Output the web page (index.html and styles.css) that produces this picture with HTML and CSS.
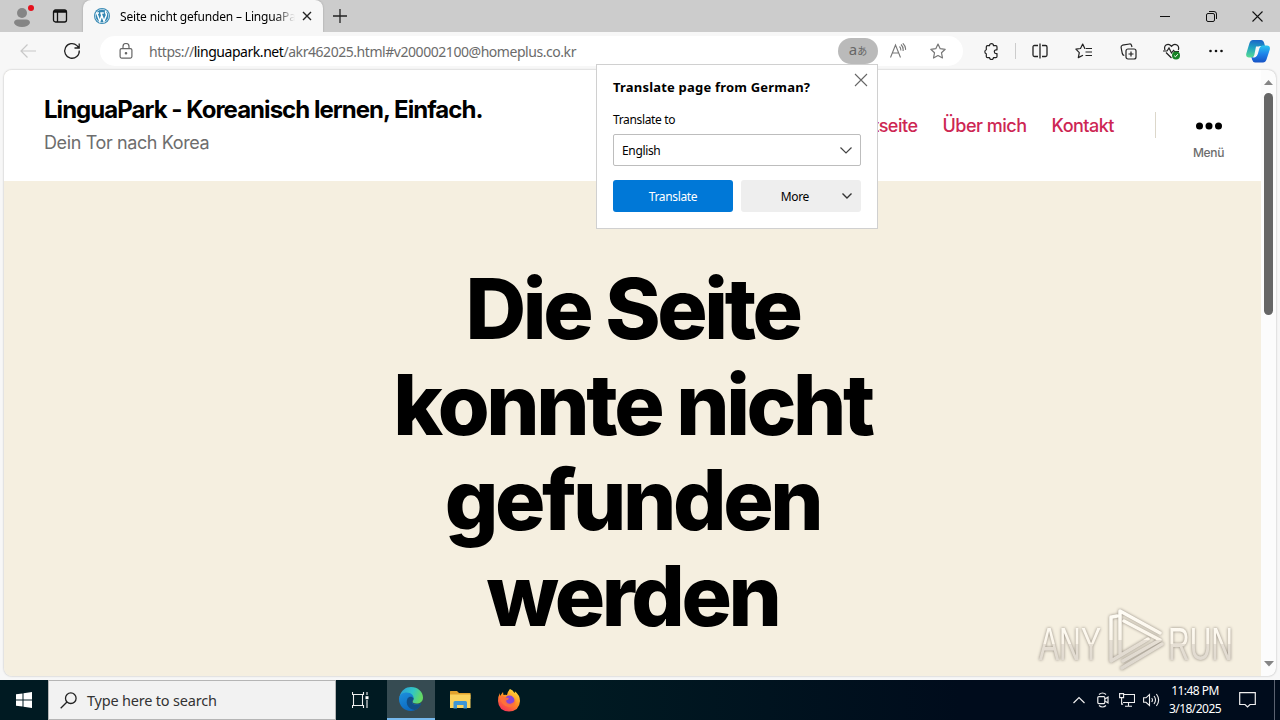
FILE: index.html
```html
<!DOCTYPE html>
<html lang="de">
<head>
<meta charset="utf-8">
<title>Seite nicht gefunden – LinguaPark</title>
<link rel="stylesheet" href="styles.css">
</head>
<body>
<div class="desktop">
  <div class="tabbar">
    <div class="profile">
      <svg width="24" height="26" viewBox="0 0 24 26"><circle cx="12" cy="10" r="5" fill="#858585"/><path d="M4 20q0-3.500 4-3.500h8q4 0 4 3.500q-2 4-8 4t-8-4z" fill="#858585"/><circle cx="21" cy="5" r="3" fill="#e5101c"/></svg>
    </div>
    <div class="tab-actions">
      <svg width="16" height="16" viewBox="0 0 16 16" fill="none" stroke="#111" stroke-width="1.300"><rect x="1.500" y="2" width="13" height="12" rx="2"/><path d="M2 3.500h12" stroke-width="2.500"/><path d="M5.500 4v10"/></svg>
    </div>
    <div class="tab">
      <svg class="favicon" width="16" height="16" viewBox="0 0 16 16"><circle cx="8" cy="8" r="8" fill="#3386b2"/><circle cx="8" cy="8" r="6.700" fill="none" stroke="#e4f2f8" stroke-width=".7"/><path d="M2 5h3M6.300 5h3.500M2.800 5.200l3 8 2-6M7 5.200l3 8q1.300-3.500 2.200-5.500.6-1.700-.5-2.800-.7-1.400.7-1.700" fill="none" stroke="#fff" stroke-width="1.500"/></svg>
      <span class="tab-title">Seite nicht gefunden – LinguaPark</span>
      <svg class="tab-close" width="10" height="10" viewBox="0 0 10 10" stroke="#222" stroke-width="1.400"><path d="M1 1l8 8M9 1L1 9"/></svg>
    </div>
    <div class="newtab"><svg width="14" height="14" viewBox="0 0 14 14" stroke="#222" stroke-width="1.300"><path d="M7 0v14M0 7h14"/></svg></div>
    <div class="winctl">
      <div><svg width="10" height="10" viewBox="0 0 10 10" stroke="#111"><path d="M0 5.500h10"/></svg></div>
      <div><svg width="11" height="11" viewBox="0 0 11 11" fill="none" stroke="#111"><rect x=".5" y="2.500" width="8" height="8" rx="1.500"/><path d="M3 .5h5q2.500 0 2.500 2.500v5"/></svg></div>
      <div><svg width="11" height="11" viewBox="0 0 11 11" stroke="#111" stroke-width="1.100"><path d="M.5.5l10 10M10.500.5l-10 10"/></svg></div>
    </div>
  </div>

  <div class="toolbar">
    <div class="tool back"><svg width="16" height="14" viewBox="0 0 16 14" fill="none" stroke="#c8c8c8" stroke-width="1.200"><path d="M16 7H1M7.500.5L1 7l6.500 6.500"/></svg></div>
    <div class="tool"><svg width="18" height="18" viewBox="0 0 18 18" fill="none" stroke="#222" stroke-width="1.300"><path d="M16.300 8.500A7.300 7.300 0 1 1 14 3.600L16 6M16.200 1.500V6H11.500"/></svg></div>
    <div class="address">
      <svg class="lock" width="14" height="16" viewBox="0 0 14 16" fill="none" stroke="#666" stroke-width="1.200"><rect x="1.100" y="5.600" width="11.800" height="9.500" rx="1.500"/><path d="M4 5.500V3.500a3 3 0 0 1 6 0v2"/><circle cx="7" cy="10.300" r=".7" fill="#666"/></svg>
      <span class="url">https://<b>linguapark.net</b>/akr462025.html#v200002100@homeplus.co.kr</span>
      <span class="lang-pill"><span class="lat">a</span><span class="kana">あ</span></span>
      <div class="addr-icon"><svg width="18" height="16" viewBox="0 0 18 16" fill="none" stroke="#777" stroke-width="1.100"><path d="M1.500 14.500L6.500 2l5 12.500M3.300 10h6.400M10.500 3.500q1.500 1.500 1.300 4M12 1.500q2.600 2.500 2.100 6.500M13.800.3q3.200 3 2.700 6.500"/></svg></div>
      <div class="addr-icon star"><svg width="16" height="16" viewBox="0 0 16 16" fill="none" stroke="#777" stroke-width="1.200" stroke-linejoin="round"><path d="M8 1l2.200 4.700 5 .6-3.700 3.500 1 5.200L8 12.500 3.500 15l1-5.200L.8 6.300l5-.6z"/></svg></div>
    </div>
    <div class="tools">
      <div class="tool ext"><svg width="16" height="17" viewBox="0 0 16 17" fill="none" stroke="#222" stroke-width="1.200" stroke-linejoin="round"><path d="M4.500 2.700H6.500a2 2 0 0 1 4 0h2.300q1.200 0 1.200 1.200v2.900h-.8a1.900 1.900 0 0 0 0 3.800h.8v2.800q0 1.200-1.200 1.200H10.500a2 2 0 0 1-4 0H4.500q-1.200 0-1.200-1.200V10.700a2.100 2.100 0 0 1 0-4V3.900q0-1.200 1.200-1.200z"/></svg></div>
      <div class="sep"></div>
      <div class="tool"><svg width="16" height="16" viewBox="0 0 16 16" fill="none" stroke="#222" stroke-width="1.300"><path d="M6 2.500H2.500q-1.500 0-1.500 1.500v8q0 1.500 1.500 1.500H6M10 2.500h3.500q1.500 0 1.500 1.500v8q0 1.500-1.500 1.500H10M8 .5v15"/></svg></div>
      <div class="tool"><svg width="18" height="16" viewBox="0 0 18 16" fill="none" stroke="#222" stroke-width="1.200" stroke-linejoin="round"><path d="M10.500 5.500H9.800L7.700 1 5.500 5.500.9 6.200l3.400 3.400-1 5 4.700-2.400M11 5.500h6M10.500 9H17M10.500 12.500H17"/></svg></div>
      <div class="tool"><svg width="17" height="17" viewBox="0 0 17 17" fill="none" stroke="#222" stroke-width="1.200"><rect x="6" y="6" width="10" height="10" rx="2"/><path d="M11 8.500v5M8.500 11h5M4.300 12.500Q2.700 12.200 2.300 10.500L1.100 4.500Q.9 2.700 2.500 2.200L9.500 1q1.700-.2 2 1.300L12 4"/></svg></div>
      <div class="tool"><svg width="18" height="17" viewBox="0 0 18 17" fill="none" stroke="#222" stroke-width="1.200"><path d="M2 7Q.8 3.500 3 2q3-1.700 5.500 1.300Q11 .3 14 2q2.500 1.700 1.300 5M3 9.500l5.500 5.500M0 8h4l2-3 2.500 5L10.500 7.500l1 1H16"/><circle cx="13" cy="12.500" r="4" fill="#168326" stroke="none"/><path d="M11.200 12.700l1.300 1.100 2.300-2.600" stroke="#fff" stroke-width="1"/></svg></div>
      <div class="tool"><svg width="14" height="4" viewBox="0 0 14 4" fill="#111"><circle cx="1.500" cy="2" r="1.300"/><circle cx="7" cy="2" r="1.300"/><circle cx="12.500" cy="2" r="1.300"/></svg></div>
      <div class="copilot"><svg width="24" height="23" viewBox="0 0 24 23"><defs><linearGradient id="ca" x1="0.300" y1="0" x2=".2" y2="1"><stop offset="0" stop-color="#1b68c8"/><stop offset=".45" stop-color="#22a4c0"/><stop offset="1" stop-color="#58dc93"/></linearGradient><linearGradient id="cb" x1="0" y1="0" x2="0" y2="1"><stop offset="0" stop-color="#2bc5ef"/><stop offset=".5" stop-color="#1d83ea"/><stop offset="1" stop-color="#1652c5"/></linearGradient></defs><path d="M7 0h8q2.500 0 3.300 3.500l.7 2.500h-4q-2.500 0-3.300 3l-1.700 6q-.8 2.500-3 2.500H3q-3.500 0-2.700-4L3.500 3Q4.500 0 7 0z" fill="url(#ca)"/><path d="M17 22.500H9q-2 0-3-3l-.5-2.500H9q2 0 2.800-3l1.700-6q1-2.500 3-2.500h4.500q3.500 0 2.800 4L20.500 19.500q-1 3-3.500 3z" fill="url(#cb)"/><path d="M10 6.500h4.500q-1.500.5-2 2.500l-2 6.500q-.6 2-2 2H6q1.800-.2 2.300-2.500z" fill="#f7f7f7"/></svg></div>
    </div>
  </div>

  <div class="frame">
    <main class="page">
      <header class="site-header">
        <div class="titles">
          <div class="site-title">LinguaPark - Koreanisch lernen, Einfach.</div>
          <div class="site-desc">Dein Tor nach Korea</div>
        </div>
        <nav class="nav"><a>Startseite</a><a class="about">Über mich</a><a class="contact">Kontakt</a></nav>
        <div class="menu">
          <svg width="26" height="8" viewBox="0 0 26 8"><circle cx="3.500" cy="4" r="3.500"/><circle cx="13" cy="4" r="3.500"/><circle cx="22.500" cy="4" r="3.500"/></svg>
          <span>Menü</span>
        </div>
      </header>
      <section class="hero"><h1>Die Seite<br>konnte nicht<br>gefunden<br>werden</h1></section>
    </main>
    <div class="scrollbar">
      <svg width="9" height="6" viewBox="0 0 9 6"><path d="M4.500 0L9 5H0z" fill="#858585"/></svg>
      <div class="thumb"></div>
      <svg class="down" width="10" height="6" viewBox="0 0 10 6"><path d="M0 0h10L5 5.500z" fill="#858585"/></svg>
    </div>
  </div>

  <div class="taskbar">
    <div class="start"><svg width="16" height="16" viewBox="0 0 16 16" fill="#fff"><path d="M0 2.300L6.500 1.400V7.500H0zM7.500 1.200L16 0v7.500H7.500zM0 8.500h6.500v6.100L0 13.700zM7.500 8.500H16V16l-8.500-1.200z"/></svg></div>
    <div class="search"><svg width="17" height="17" viewBox="0 0 17 17" fill="none" stroke="#222" stroke-width="1.300"><circle cx="10.800" cy="6.200" r="5.300"/><path d="M7 10L.7 16.300"/></svg><span>Type here to search</span></div>
    <div class="task taskview"><svg width="17" height="16" viewBox="0 0 17 16" fill="none" stroke="#eee" stroke-width="1.100"><path d="M.5 0v2.500h11V0M.5 16v-2.500h11V16M1.500 2.500v11M10.500 2.500v11M15 0v3M15 8v8"/><path d="M13.500 4.200h3v3h-3z" fill="#fff" stroke="none"/></svg></div>
    <div class="task active"><svg width="26" height="26" viewBox="0 0 26 26"><defs><linearGradient id="ea" x1="0" y1="0" x2="1" y2=".3"><stop offset="0" stop-color="#2a98d8"/><stop offset=".6" stop-color="#31c5c5"/><stop offset="1" stop-color="#63d865"/></linearGradient><linearGradient id="eb" x1="0" y1="0" x2=".6" y2="1"><stop offset="0" stop-color="#1d90dc"/><stop offset="1" stop-color="#0b66bd"/></linearGradient></defs><path d="M1.500 11C3 4 8 1 13 1c7 0 12 5 12 10.500 0 4-3 6-6.500 6-3 0-4.500-1.200-3.700-2.300C17 12 14 9 10 9c-4 0-7 1-8.500 2z" fill="url(#ea)"/><path d="M1 13C1 8.500 5 6.500 8.500 6.500c5 0 7.500 3.500 7 6-.3 1.500-1.500 1.700-1.500 3 0 2 3 3.500 6 3 1.500-.2 2.500-.8 3.200-1C21 22 17.500 25 13 25 6 25 1 19.500 1 13z" fill="url(#eb)"/><path d="M9.500 12.500c-2.500 5 1 11 7.500 11.500 3-1 5-3.500 6.200-6.500-5 2.500-10 1-9.200-2.500.3-1.300 1.500-1.500 1.500-2.500-1-2.500-4.500-2.500-6 0z" fill="#124f86"/></svg></div>
    <div class="task"><svg width="22" height="20" viewBox="0 0 22 20"><path d="M1 1.500Q1 1 1.500 1H8l2 2h11.500v6H1z" fill="#e2a32d"/><path d="M1 4.500h20.500V18H1z" fill="#fbd35e"/><path d="M4.500 18.500v-6q0-1.500 1.500-1.500h10.500q1.500 0 1.500 1.500v6h-3.500V15h-6.500v3.500z" fill="#3e96d6"/></svg></div>
    <div class="task"><svg width="24" height="24" viewBox="0 0 24 24"><defs><linearGradient id="fa" x1=".8" y1="0" x2=".2" y2="1"><stop offset="0" stop-color="#ffe23a"/><stop offset=".5" stop-color="#ff8a24"/><stop offset="1" stop-color="#f52b5d"/></linearGradient></defs><path d="M13 1q3 1 4.500 4 .5-.5.300-1.800Q23 7 23 13q-.5 10-11 10.500Q1.500 23 1 13 1 8 3 5v3l3-4 .5 3q2-.7 3.500 0 1-4 3-6z" fill="url(#fa)"/><circle cx="12.500" cy="12.500" r="5" fill="#8745d8"/><path d="M3 9q3-1.500 5.500.5L12 10q-.5 2-3 2.500 1 4 5 3 4-1 4-5Q20 19 12 19 4 18 3 9z" fill="#ff7139" opacity=".9"/></svg></div>
    <div class="tray">
      <svg width="12" height="8" viewBox="0 0 12 8" fill="none" stroke="#eee" stroke-width="1.200"><path d="M.5 7L6 1.500 11.500 7"/></svg>
      <svg class="meet" width="12" height="16" viewBox="0 0 12 16" fill="none" stroke="#eee" stroke-width="1.200"><rect x=".8" y="4.600" width="7" height="7" rx="1"/><path d="M8 7l3-2v6L8 9M2 2.500Q5.500-.5 9 2.500M2 13.500q3.500 3 7 0"/></svg>
      <svg class="net" width="16" height="14" viewBox="0 0 16 14" fill="none" stroke="#eee" stroke-width="1.100"><path d="M5 1.500h10.500v8H4M9.500 9.500v3.500M6 13.200h7M.6.6h4v4h-4zM2.600 4.600v6.500h1.500"/></svg>
      <svg class="vol" width="17" height="14" viewBox="0 0 17 14" fill="none" stroke="#eee" stroke-width="1.100"><path d="M.6 4.800H3L6.500 1.500v11L3 9.300H.6zM8.700 5q1.500 2 0 4M11 3q3 4 0 8M13.400 1q4.500 6 0 12"/></svg>
      <div class="clock"><span>11:48 PM</span><span>3/18/2025</span></div>
      <svg class="note" width="17" height="16" viewBox="0 0 17 16" fill="none" stroke="#eee" stroke-width="1.200"><path d="M.7.700h15.600v11.800H11L8.500 15 6 12.500H.7z"/></svg>
      <div class="peek"></div>
    </div>
  </div>

  <div class="popup">
    <div class="popup-head"><strong>Translate page from German?</strong><svg width="14" height="14" viewBox="0 0 14 14" stroke="#666" stroke-width="1.100"><path d="M1 1l12 12M13 1L1 13"/></svg></div>
    <label>Translate to</label>
    <div class="select"><span>English</span><svg width="12" height="7" viewBox="0 0 12 7" fill="none" stroke="#444" stroke-width="1.200"><path d="M.5.5L6 6 11.500.5"/></svg></div>
    <div class="buttons"><div class="btn primary">Translate</div><div class="btn more"><span>More</span><svg width="10" height="6" viewBox="0 0 10 6" fill="none" stroke="#333" stroke-width="1.400"><path d="M.5.5L5 5 9.500.5"/></svg></div></div>
  </div>

  <svg class="watermark" width="204" height="66" viewBox="0 0 204 66">
    <defs><linearGradient id="wm" x1="0" y1="0" x2="0" y2="1"><stop offset="0" stop-color="#fffdf6"/><stop offset=".5" stop-color="#fbf5ea"/><stop offset=".51" stop-color="#e6dfd4"/><stop offset="1" stop-color="#ddd7ce"/></linearGradient></defs>
    <g class="wm-text" fill="url(#wm)">
      <text x="1" y="53" textLength="62" lengthAdjust="spacingAndGlyphs">ANY</text>
      <text x="130" y="53" textLength="65" lengthAdjust="spacingAndGlyphs">RUN</text>
    </g>
    <g class="wm-logo" fill="none" stroke="url(#wm)" stroke-width="3.500" stroke-linejoin="round" stroke-linecap="round"><path d="M82 47V4L122 26M122 33L86 14M85 54L122 33M84 61L124 37M73 10V54L110 32M74 10l5-1"/></g>
  </svg>
</div>
</body>
</html>
```
FILE: styles.css
```css
* { box-sizing: border-box; }
body { margin: 0; font-family: "Noto Sans", sans-serif; color: #000; }
svg { display: block; flex: none; }
.desktop { position: relative; width: 1280px; height: 720px; overflow: hidden; display: flex; flex-direction: column; background: #f7f7f7; }

.tabbar { height: 32px; flex: none; display: flex; background: #ccc; }
.profile { width: 43px; padding: 3px 0 0 10px; }
.tab-actions { width: 40px; padding: 8px 0 0 9px; }
.tab { width: 240px; display: flex; align-items: center; padding-left: 11px; background: #f7f7f7; border-radius: 8px 8px 0 0; box-shadow: 0 0 2px #999; clip-path: inset(0 -3px 0 -3px); }
.tab-title { width: 175px; margin-left: 10px; overflow: hidden; white-space: nowrap; font-size: 12px; letter-spacing: -.17px; -webkit-mask-image: linear-gradient(90deg, #000 155px, transparent 175px); mask-image: linear-gradient(90deg, #000 155px, transparent 175px); }
.tab-close { margin-left: 7px; }
.newtab { padding: 9px 0 0 10px; }
.winctl { margin-left: auto; display: flex; }
.winctl div { width: 46px; display: flex; align-items: center; justify-content: center; }

.toolbar { height: 38px; flex: none; display: flex; align-items: center; padding-left: 6px; background: #f7f7f7; }
.tool { width: 44px; display: flex; align-items: center; justify-content: center; }
.address { width: 863px; height: 30px; margin-left: 6px; display: flex; align-items: center; padding-left: 19px; border-radius: 15px; background: #fff; }
.url { margin-left: 16px; width: 689px; font-size: 14px; color: #6b6b6b; white-space: nowrap; letter-spacing: -.45px; }
.url b { font-weight: 400; color: #000; }
.lang-pill { width: 40px; height: 26px; border-radius: 13px; background: #bababa; color: #666; display: flex; align-items: center; justify-content: center; line-height: 1; }
.lat { font-size: 15px; padding-bottom: 3px; }
.kana { font: 10px/1 "Noto Sans CJK JP", sans-serif; }
.addr-icon { width: 40px; display: flex; justify-content: center; }
.tools { display: flex; align-items: center; margin-left: 6px; }
.ext { width: 46px; }
.ext svg { margin-right: 2px; }
.sep { width: 1px; height: 16px; background: #ccc; margin-right: 2px; }
.copilot { width: 40px; display: flex; justify-content: center; }

.frame { height: 606px; flex: none; margin: 0 4px; display: flex; background: #fcfcfc; border-radius: 8px; overflow: hidden; box-shadow: 0 0 2px #aaa; }
.page { width: 1257px; display: flex; flex-direction: column; background: #f5efe0; font-family: Inter, sans-serif; }
.site-header { height: 111px; flex: none; display: flex; background: #fff; }
.titles { width: 850px; padding: 25px 0 0 40px; }
.site-title { font-size: 24px; line-height: 30px; font-weight: 700; letter-spacing: -.97px; }
.site-desc { margin-top: 7px; font-size: 18px; line-height: 22px; color: #6d6d6d; letter-spacing: -.38px; }
.nav { width: 302px; flex: none; height: 26px; margin-top: 42px; display: flex; justify-content: flex-end; padding-right: 41px; border-right: 1px solid #dcd7ca; gap: 25px; font-size: 18px; line-height: 27px; font-weight: 500; color: #cd2653; letter-spacing: -.5px; white-space: nowrap; }
.menu { width: 105px; flex: none; padding-top: 52px; display: flex; flex-direction: column; align-items: center; font-size: 12px; line-height: 15px; font-weight: 500; color: #6d6d6d; letter-spacing: -.3px; }
.menu span { margin-top: 15px; }
.hero { flex: 1; padding-top: 80px; }
.hero h1 { margin: 0; text-align: center; font-size: 84px; line-height: 95.67px; font-weight: 800; letter-spacing: -3.4px; }
.scrollbar { width: 15px; display: flex; flex-direction: column; align-items: center; padding-top: 10px; }
.thumb { width: 9px; height: 222px; margin-top: 7px; background: #666; border-radius: 5px; }
.down { margin-top: auto; margin-bottom: 9px; }

.taskbar { height: 40px; flex: none; margin-top: 4px; display: flex; background: linear-gradient(90deg, #001a22, #001a22 45%, #000c1c 75%); color: #fff; }
.start { width: 48px; display: flex; align-items: center; justify-content: center; }
.search { width: 288px; display: flex; align-items: center; padding-left: 11px; background: #f2f2f2; border: 1px solid #b5b5b5; color: #333; font-size: 14.5px; }
.search span { margin-left: 10px; letter-spacing: -.2px; }
.task { width: 49px; display: flex; align-items: center; justify-content: center; }
.taskview { width: 51px; padding-right: 3px; }
.active { width: 48px; background: #364b52; border-bottom: 2px solid #76b9ed; }
.tray { margin-left: auto; width: 207px; display: flex; align-items: center; }
.meet { margin-left: 12px; }
.net { margin-left: 10px; }
.vol { margin-left: 8px; }
.clock { width: 56px; margin-left: 7px; display: flex; flex-direction: column; align-items: center; font-size: 12px; line-height: 18px; letter-spacing: -.55px; white-space: nowrap; }
.note { margin-left: 16px; }
.peek { width: 1px; height: 40px; margin-left: 18px; background: #5a6270; }

.popup { position: absolute; left: 596px; top: 64px; width: 282px; height: 165px; padding: 8px 16px; background: #fff; border: 1px solid #d0d0d0; display: flex; flex-direction: column; font-size: 12px; letter-spacing: -.35px; }
.popup-head { height: 28px; display: flex; justify-content: space-between; margin-right: -7px; font-size: 13px; line-height: 28px; letter-spacing: .2px; }
.popup label { margin-top: 9px; line-height: 20px; }
.select { height: 32px; margin-top: 4px; border: 1px solid #bdbdbd; border-radius: 2px; display: flex; align-items: center; justify-content: space-between; padding: 0 8px; }
.buttons { display: flex; gap: 8px; margin-top: 14px; }
.btn { width: 120px; height: 32px; border-radius: 3px; display: flex; align-items: center; justify-content: center; }
.primary { background: #0078d7; color: #fff; }
.more { background: #eee; justify-content: flex-end; padding-right: 9px; }
.more svg { margin-left: 33px; }

.watermark { position: absolute; left: 1038px; top: 607px; filter: drop-shadow(0 0 1.500px #8d857a); }
.wm-text { font: 47px "Liberation Sans", sans-serif; }
```
